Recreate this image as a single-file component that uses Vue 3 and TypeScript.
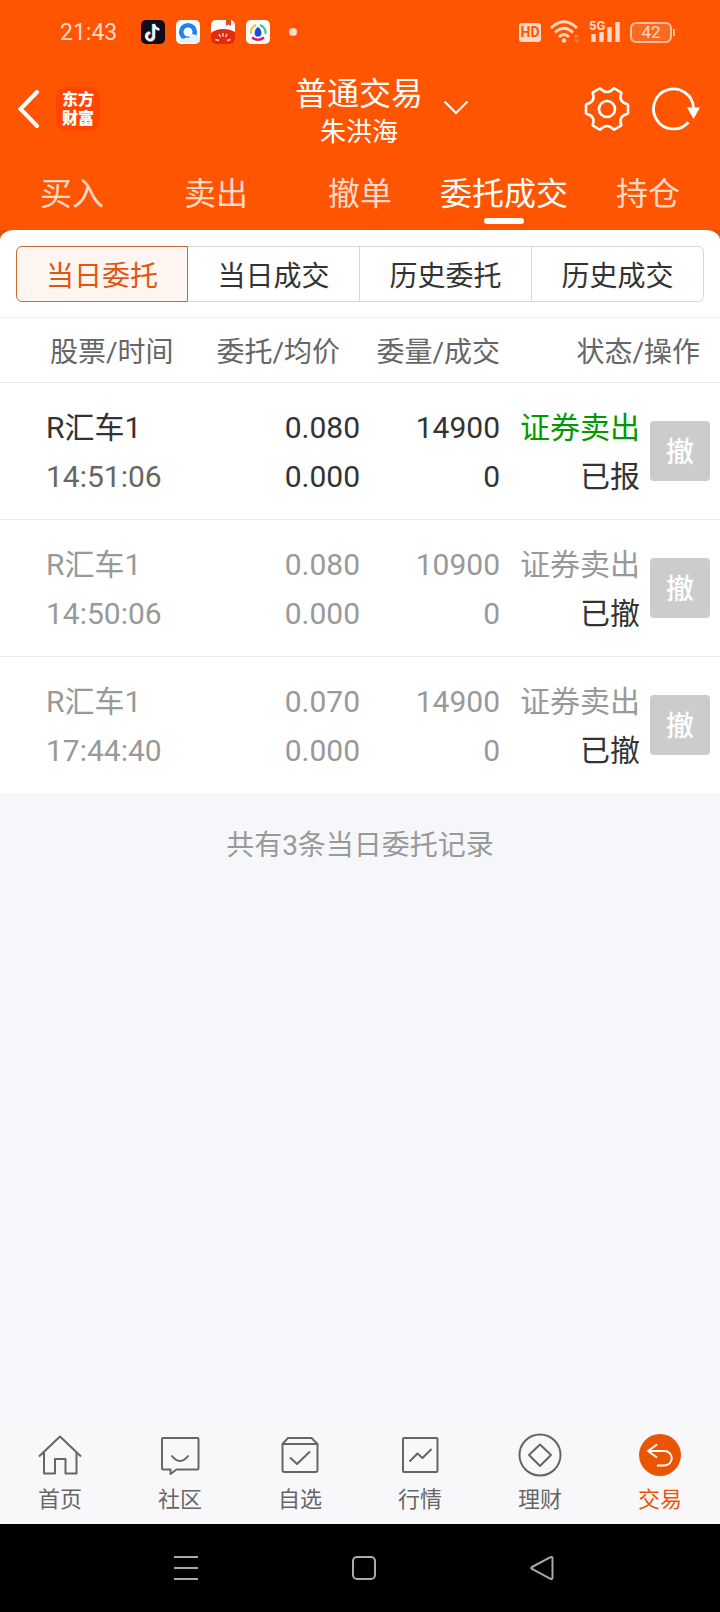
<script setup lang="ts">
import { ref } from 'vue'

interface Order {
  name: string
  time: string
  price: string
  average: string
  amount: string
  filled: string
  side: string
  state: string
  active: boolean
}

const tabs = ['买入', '卖出', '撤单', '委托成交', '持仓']
const activeTab = ref('委托成交')

const views = ['当日委托', '当日成交', '历史委托', '历史成交']
const activeView = ref('当日委托')

const orders: Order[] = [
  { name: 'R汇车1', time: '14:51:06', price: '0.080', average: '0.000', amount: '14900', filled: '0', side: '证券卖出', state: '已报', active: true },
  { name: 'R汇车1', time: '14:50:06', price: '0.080', average: '0.000', amount: '10900', filled: '0', side: '证券卖出', state: '已撤', active: false },
  { name: 'R汇车1', time: '17:44:40', price: '0.070', average: '0.000', amount: '14900', filled: '0', side: '证券卖出', state: '已撤', active: false },
]

const navItems = [
  { label: '首页', paths: ['M1 23.5L22 3.5L43 23.5', 'M6 19.5V40.5H17V26H27.5V40.5H38.5V19.5'] },
  { label: '社区', paths: ['M5 5H39.5Q40.5 5 40.5 6V35.5Q40.5 36.5 39.5 36.5H18.5L12.5 41V36.5H5Q4 36.5 4 35.5V6Q4 5 5 5Z', 'M13.5 22.5Q22 33.5 30.5 22.5'] },
  { label: '自选', paths: ['M4.5 11L10 5H33.5L39.5 11V37Q39.5 39 37.5 39H6.5Q4.5 39 4.5 37V11H39.5', 'M12 24.5L19 31L32 18.5'] },
  { label: '行情', paths: ['M6 5H38.5Q39.5 5 39.5 6V38Q39.5 39 38.5 39H6Q5 39 5 38V6Q5 5 6 5Z', 'M11.5 28.5L19.5 20.5L24.5 25L33.5 16'] },
  { label: '理财', paths: ['M1.5 22A20.5 20.5 0 1 1 42.5 22A20.5 20.5 0 1 1 1.5 22Z', 'M22 11.5L33 22L22 33L11 22Z'] },
  { label: '交易', paths: ['M19 11.5L10 18L19 24.5', 'M10 18H26.5A7.2 7.2 0 0 1 26.5 32.5H19'] },
]
const activeNav = ref('交易')
</script>

<template>
  <div class="screen">
    <header class="top">
      <div class="status">
        <time class="clock">21:43</time>
        <div class="apps">
          <svg viewBox="0 0 24 24" aria-hidden="true">
            <rect width="24" height="24" rx="5" fill="#100c1c" />
            <g fill="none" stroke-width="2.4">
              <path d="M12 4V16.4A3.6 3.6 0 1 1 8.6 12.4M12 4Q13 8.2 17.4 9" stroke="#25e8e4" />
              <path d="M13.4 5V17.4A3.6 3.6 0 1 1 10 13.6M13.4 5Q14.4 9 18.8 10" stroke="#f8325a" />
              <path d="M12.8 4V16.8A3.6 3.6 0 1 1 9.2 12.9M12.8 4Q13.8 8.7 18.2 9.4" stroke="#fff" />
            </g>
          </svg>
          <svg viewBox="0 0 24 24" aria-hidden="true">
            <rect width="24" height="24" rx="5" fill="#fff" />
            <circle cx="12" cy="12" r="6.8" fill="none" stroke="#1d83ef" stroke-width="4.6" />
            <path d="M4 23Q3 18 8 18.500Q11 17 13 18Q14.500 12.500 18.500 14.500Q21 16 24 17V19Q24 23 20 23Z" fill="#e4f0fc" />
          </svg>
          <svg viewBox="0 0 24 24" aria-hidden="true">
            <rect width="24" height="24" rx="5" fill="#fff" />
            <path d="M15 0H20V6L17.500 4.500L15 6Z" fill="#e8451c" />
            <path d="M0 13Q5 9 12 9T24 12V19Q24 24 19 24H5Q0 24 0 19Z" fill="#e5290d" />
            <path d="M12 13V16.500M8 14L9.500 17M16 14L14.500 17M4.500 19.500L8 20.500M19.500 19.500L16 20.500" stroke="#ffe0c8" stroke-width="1.400" />
          </svg>
          <svg viewBox="0 0 24 24" aria-hidden="true">
            <rect width="24" height="24" rx="5" fill="#fff" />
            <path d="M12 7Q15.500 9 15.500 14L14 16.500H10L8.500 14Q8.500 9 12 7Z" fill="#1450d2" />
            <path d="M5 14A8 8 0 0 1 10 5" fill="none" stroke="#f2c32c" stroke-width="2" />
            <path d="M14 5A8 8 0 0 1 19.500 14" fill="none" stroke="#38bf91" stroke-width="2" />
            <path d="M6 17.500Q12 22 18 17.500" fill="none" stroke="#d81b60" stroke-width="2.400" />
          </svg>
          <i class="dot"></i>
        </div>
        <div class="signals">
          <span class="hd">HD</span>
          <svg class="wifi" viewBox="0 0 30 24" aria-hidden="true">
            <g fill="none" stroke="#ffd9c7" stroke-width="2.800">
              <path d="M1 8Q14 -4.500 27 8" /><path d="M5 12.500Q14 4 23 12.500" /><path d="M9 17Q14 12 19 17" />
            </g>
            <circle cx="14" cy="20.500" r="2.200" fill="#ffd9c7" />
            <path d="M23.500 17.500L26.500 14L29.500 17.500ZM23.500 19.500L26.500 23L29.500 19.500Z" fill="#ff7a3b" />
          </svg>
          <span class="cell">
            <span class="gen">5G</span>
            <svg viewBox="0 0 32 24" aria-hidden="true">
              <path d="M4.500 14V22M12.500 12V22M20.500 7V22M28.500 2V22" stroke="#ffd9c7" stroke-width="4.400" />
            </svg>
          </span>
          <span class="battery">42</span>
        </div>
      </div>

      <div class="titlebar">
        <div class="side">
          <button class="icon-btn" type="button" aria-label="返回">
            <svg width="24" height="44" viewBox="0 0 24 44"><path d="M19 5L2.500 22L19 39" fill="none" stroke="#fff" stroke-width="4" stroke-linecap="round" /></svg>
          </button>
          <span class="logo">东方<br />财富</span>
        </div>
        <button class="account" type="button">
          <span class="names"><span class="title">普通交易</span><span class="owner">朱洪海</span></span>
          <svg class="chevron" width="26" height="16" viewBox="0 0 26 16" aria-hidden="true"><path d="M1.500 1.500L13 13L24.500 1.500" fill="none" stroke="#fff" stroke-width="2" /></svg>
        </button>
        <div class="side end">
          <button class="icon-btn" type="button" aria-label="设置">
            <svg width="46" height="46" viewBox="0 0 46 46" fill="none" stroke="#fff" stroke-width="2.600" stroke-linejoin="round">
              <path d="M44 19Q44 18.400 43 18Q34.300 15.500 37.200 7.600Q37.500 6.600 37 6.300L30.500 2.500Q30 2.200 29.200 3Q23 9 16.800 3Q16 2.200 15.500 2.500L9 6.300Q8.500 6.600 8.800 7.600Q11.700 15.500 3 18Q2 18.400 2 19V27Q2 27.600 3 28Q11.700 30.500 8.800 38.400Q8.500 39.400 9 39.700L15.500 43.500Q16 43.800 16.800 43Q23 37 29.200 43Q30 43.800 30.500 43.500L37 39.700Q37.500 39.400 37.200 38.400Q34.300 30.500 43 28Q44 27.600 44 27Z" />
              <circle cx="23" cy="23" r="8" />
            </svg>
          </button>
          <button class="icon-btn" type="button" aria-label="刷新">
            <svg width="48" height="46" viewBox="0 0 48 46"><path d="M36.500 36.200A20 20 0 1 1 41.500 22" fill="none" stroke="#fff" stroke-width="2.800" /><path d="M35 21.500H48L41.500 33Z" fill="#fff" /></svg>
          </button>
        </div>
      </div>

      <nav class="tabs" aria-label="交易">
        <button v-for="tab in tabs" :key="tab" type="button" class="tab" :class="{ on: tab === activeTab }" @click="activeTab = tab">{{ tab }}</button>
      </nav>
      <div class="lip"></div>
    </header>

    <main class="content">
      <section class="panel">
        <div class="segments">
          <button v-for="view in views" :key="view" type="button" class="segment" :class="{ on: view === activeView }" @click="activeView = view">{{ view }}</button>
        </div>
        <table class="orders">
          <colgroup>
            <col class="c-name" /><col class="c-price" /><col class="c-amount" /><col class="c-state" /><col class="c-action" />
          </colgroup>
          <thead>
            <tr>
              <th scope="col" class="h-name">股票/时间</th>
              <th scope="col" class="h-price">委托/均价</th>
              <th scope="col">委量/成交</th>
              <th scope="col" colspan="2" class="h-state">状态/操作</th>
            </tr>
          </thead>
          <tbody>
            <tr v-for="order in orders" :key="order.time" :class="{ closed: !order.active }">
              <td class="name"><div>{{ order.name }}</div><div class="time">{{ order.time }}</div></td>
              <td><div>{{ order.price }}</div><div>{{ order.average }}</div></td>
              <td><div>{{ order.amount }}</div><div>{{ order.filled }}</div></td>
              <td><div class="sell">{{ order.side }}</div><div class="state">{{ order.state }}</div></td>
              <td class="action"><button type="button" class="cancel">撤</button></td>
            </tr>
          </tbody>
        </table>
      </section>
      <p class="summary">共有3条当日委托记录</p>
    </main>

    <nav class="bottom" aria-label="主导航">
      <a v-for="item in navItems" :key="item.label" href="#" class="nav-item" :class="{ on: item.label === activeNav }" @click.prevent="activeNav = item.label">
        <svg width="44" height="44" viewBox="0 0 44 44" aria-hidden="true">
          <circle v-if="item.label === activeNav" cx="22" cy="22" r="21" fill="#ea5504" />
          <path v-for="d in item.paths" :key="d" :d="d" fill="none" :stroke="item.label === activeNav ? '#fff' : '#666'" stroke-width="2" stroke-linejoin="round" />
        </svg>
        <span>{{ item.label }}</span>
      </a>
    </nav>

    <div class="system">
      <button type="button" aria-label="最近任务"><svg width="28" height="28" viewBox="0 0 28 28"><path d="M2 3H26M2 14H26M2 25H26" stroke="#aaa" stroke-width="2" /></svg></button>
      <button type="button" aria-label="主屏幕"><svg width="28" height="28" viewBox="0 0 28 28"><rect x="3" y="3" width="22" height="22" rx="4" fill="none" stroke="#aaa" stroke-width="2" /></svg></button>
      <button type="button" aria-label="返回上一页"><svg width="28" height="28" viewBox="0 0 28 28"><path d="M4 13L22.500 3.200Q24.500 2.500 24.500 4.500V23.500Q24.500 25.500 22.500 24.800L4 15Q2.500 14 4 13Z" fill="none" stroke="#aaa" stroke-width="2" /></svg></button>
    </div>
  </div>
</template>

<style>
body {
  margin: 0;
}
</style>

<style scoped>
.screen {
  display: flex;
  flex-direction: column;
  min-height: 100vh;
  background: #f6f7fa;
  color: #333;
  font-family: Roboto, 'Noto Sans CJK SC', sans-serif;
}
button {
  border: 0;
  padding: 0;
  background: none;
  color: inherit;
  font: inherit;
  cursor: pointer;
}
svg {
  display: block;
}
.top {
  background: #ff5500;
  color: #fff;
}
.status {
  display: flex;
  align-items: center;
  height: 64px;
  padding: 0 48px 0 60px;
  color: #ffd9c7;
}
.clock {
  width: 81px;
  font-size: 23px;
}
.apps {
  display: flex;
  align-items: center;
  gap: 11px;
}
.apps svg {
  width: 24px;
  height: 24px;
}
.dot {
  width: 8px;
  height: 8px;
  margin-left: 8px;
  border-radius: 50%;
  background: #ffd9c7;
}
.signals {
  display: flex;
  align-items: center;
  gap: 9px;
  margin-left: auto;
}
.hd {
  width: 22px;
  border-radius: 3px;
  background: #ffd9c7;
  color: #ff5500;
  font-size: 14px;
  font-weight: 700;
  line-height: 19px;
  text-align: center;
}
.wifi {
  width: 30px;
  height: 24px;
}
.cell {
  position: relative;
}
.cell svg {
  width: 32px;
  height: 24px;
}
.gen {
  position: absolute;
  top: 0;
  left: 0;
  font-size: 13px;
  font-weight: 700;
  line-height: 12px;
}
.battery {
  position: relative;
  width: 38px;
  border: 2px solid #ffc0a0;
  border-radius: 6px;
  background: #ff6a22;
  font-size: 17px;
  line-height: 17px;
  text-align: center;
}
.battery::after {
  content: '';
  position: absolute;
  top: 5px;
  right: -5px;
  width: 2px;
  height: 7px;
  background: #ffc0a0;
}
.titlebar {
  display: grid;
  grid-template-columns: 1fr auto 1fr;
  align-items: center;
  height: 90px;
  padding: 0 20px 0 18px;
}
.side {
  display: flex;
  align-items: center;
  gap: 14px;
}
.end {
  justify-content: flex-end;
  gap: 22px;
}
.logo {
  box-sizing: border-box;
  width: 44px;
  height: 44px;
  padding-top: 3px;
  border-radius: 10px;
  background: #ff4500;
  font-size: 16px;
  font-weight: 900;
  line-height: 19px;
  text-align: center;
}
.account {
  position: relative;
}
.names {
  display: flex;
  flex-direction: column;
  align-items: center;
  padding-top: 6px;
}
.title {
  font-size: 32px;
  line-height: 40px;
}
.owner {
  font-size: 26px;
  line-height: 36px;
}
.chevron {
  position: absolute;
  top: 32px;
  left: 100%;
  margin-left: 20px;
}
.tabs {
  display: grid;
  grid-template-columns: repeat(5, 1fr);
}
.tab {
  position: relative;
  height: 76px;
  padding-top: 4px;
  color: #ffd9c7;
  font-size: 32px;
  line-height: 72px;
  white-space: nowrap;
}
.tab.on {
  color: #fff;
}
.tab.on::after {
  content: '';
  position: absolute;
  bottom: 6px;
  left: calc(50% - 20px);
  width: 40px;
  height: 6px;
  border-radius: 3px;
  background: #fff;
}
.lip {
  height: 10px;
  background: #e65000;
}
.lip::before {
  content: '';
  display: block;
  height: 10px;
  border-radius: 14px 14px 0 0 / 10px 10px 0 0;
  background: #fff;
}
.content {
  flex: 1;
}
.panel {
  padding-top: 6px;
  background: #fff;
}
.segments {
  display: grid;
  grid-template-columns: repeat(4, 1fr);
  margin: 0 16px 15px;
}
.segment {
  height: 56px;
  border: 1px solid #d5d8da;
  border-left-width: 0;
  font-size: 28px;
}
.segment:first-child {
  border-left-width: 1px;
  border-radius: 6px 0 0 6px;
}
.segment:last-child {
  border-radius: 0 6px 6px 0;
}
.segment.on {
  border-color: #c66a35;
  background: #fff5f1;
  color: #e1560f;
}
.orders {
  width: 100%;
  border-collapse: separate;
  border-spacing: 0;
  border-top: 1px solid #f2f2f2;
  table-layout: fixed;
}
.c-price {
  width: 25%;
}
.c-amount,
.c-state {
  width: 140px;
}
.c-action {
  width: 80px;
}
th {
  height: 58px;
  padding: 6px 0 0;
  border-bottom: 1px solid #e8e8e8;
  color: #666;
  font-size: 28px;
  font-weight: 400;
  line-height: 40px;
  text-align: right;
}
.h-name {
  padding-left: 50px;
  text-align: left;
}
.h-price,
.h-state {
  padding-right: 20px;
}
td {
  padding: 20px 0 18px;
  border-bottom: 1px solid #ebebeb;
  font-size: 30px;
  line-height: 49px;
  text-align: right;
  white-space: nowrap;
}
tr:last-child td {
  border-bottom: 0;
}
.name {
  padding-left: 46px;
  text-align: left;
}
.time {
  color: #666;
}
.sell {
  color: #090;
}
.closed td,
.closed .time,
.closed .sell {
  color: #999;
}
td .state {
  color: #333;
}
.action {
  padding: 0 10px 0 0;
}
.cancel {
  display: block;
  width: 60px;
  height: 60px;
  margin-left: auto;
  padding-top: 4px;
  border-radius: 4px;
  background: #ccc;
  color: #fff;
  font-size: 28px;
  font-weight: 500;
  line-height: 56px;
}
.closed .cancel {
  color: #fff;
}
.summary {
  margin: 32px 0;
  color: #999;
  font-size: 28px;
  line-height: 42px;
  text-align: center;
}
.bottom {
  display: grid;
  grid-template-columns: repeat(6, 1fr);
  background: #f8f8fb;
}
.nav-item {
  display: flex;
  flex-direction: column;
  align-items: center;
  gap: 6px;
  padding: 10px 0 8px;
  color: #666;
  font-size: 22px;
  line-height: 33px;
  text-decoration: none;
}
.nav-item.on {
  color: #ea5504;
}
.system {
  display: flex;
  align-items: center;
  justify-content: center;
  gap: 150px;
  height: 88px;
  padding-left: 8px;
  background: #000;
}
</style>
